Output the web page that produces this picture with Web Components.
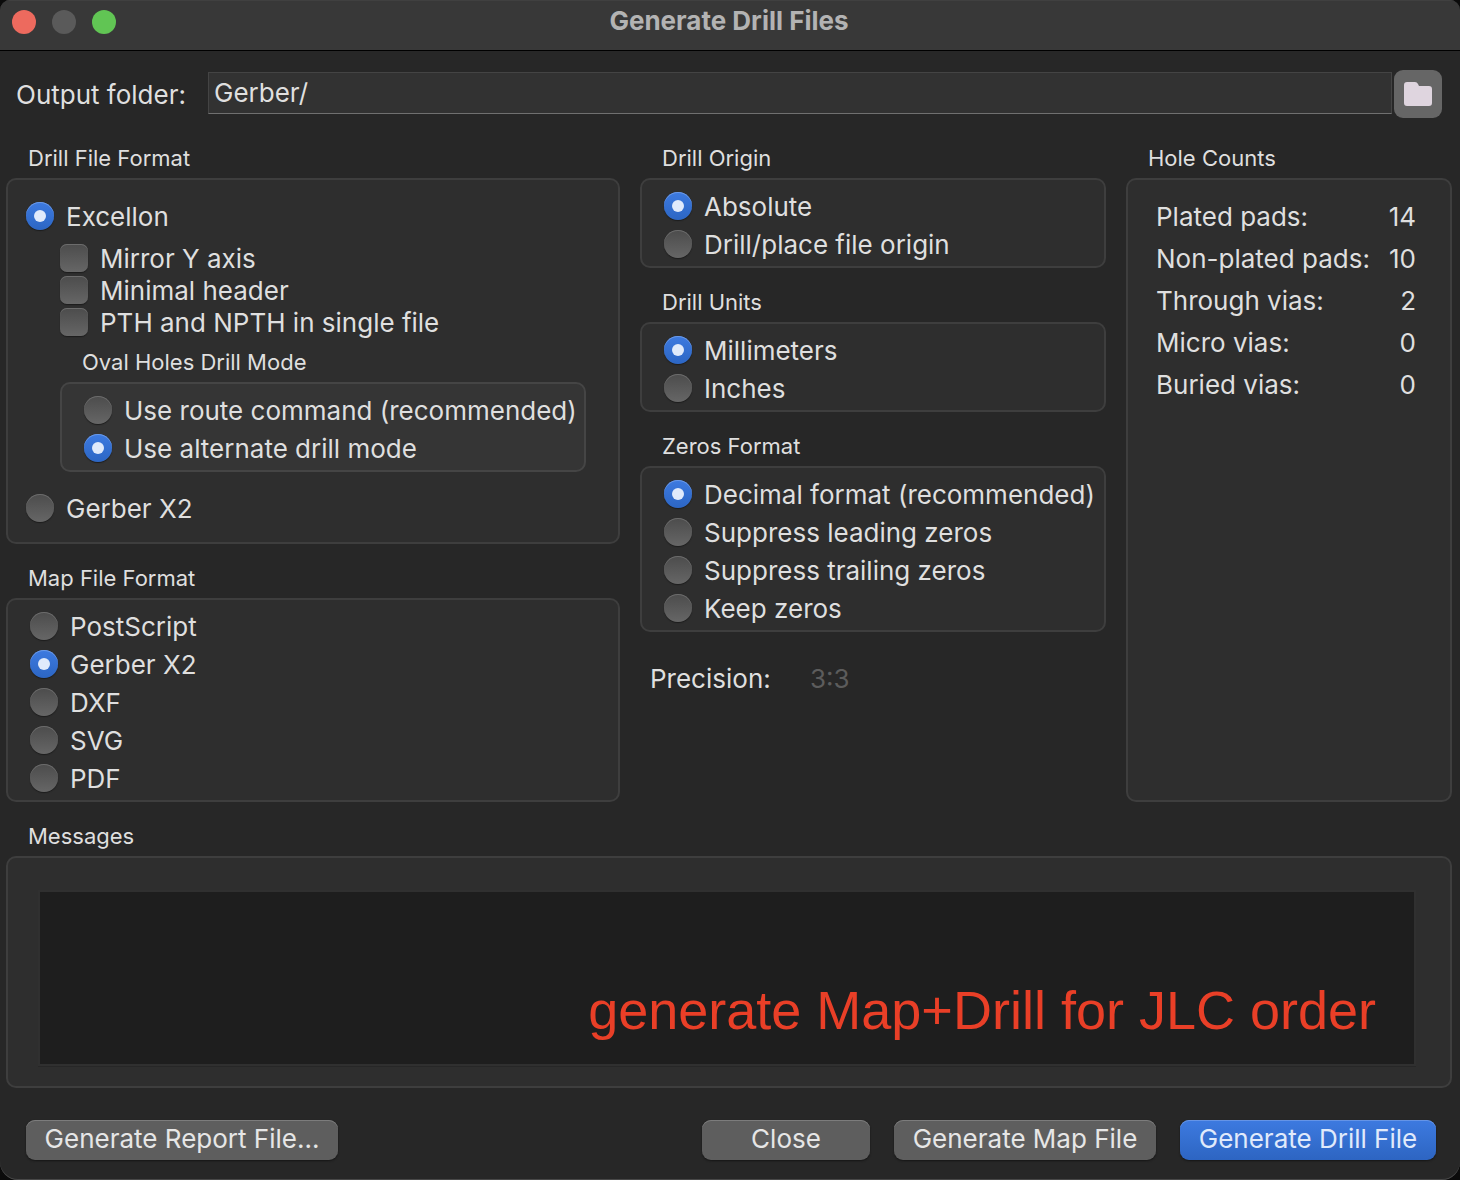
<!DOCTYPE html>
<html lang="en">
<head>
<meta charset="utf-8">
<title>Generate Drill Files</title>
<style>
  html, body { margin: 0; background: #0b0b0b; }
  body { font: 26px/28px Inter, "Liberation Sans", sans-serif; color: #dfdfdf; }
</style>
</head>
<body>
<drill-dialog></drill-dialog>

<script>
const controlCss = `
  *, *::before { box-sizing: border-box; }
  label { display: flex; align-items: center; gap: 12px; white-space: nowrap; line-height: 28px; }
  label span { padding-top: 2px; line-height: 26px; }
  input[type=radio], input[type=checkbox] {
    appearance: none; flex: none; width: 28px; height: 28px; margin: 0;
    background: linear-gradient(#4c4c4c, #666);
    box-shadow: inset 0 1px 0 #6c6c6c, 0 1px 1px #1c1c1c;
  }
  input[type=radio] { border-radius: 50%; display: grid; place-items: center; }
  input[type=checkbox] { border-radius: 7px; }
  input[type=radio]:checked {
    background: linear-gradient(#3d7ae0, #2c66c4);
    box-shadow: inset 0 1px 0 #6b99e6, 0 1px 1px #1c1c1c;
  }
  input[type=radio]:checked::before {
    content: ""; width: 12px; height: 12px; border-radius: 50%; background: #e0eafb;
  }
`;

function define(name, render) {
  customElements.define(name, class extends HTMLElement {
    constructor() {
      super();
      this.attachShadow({ mode: "open" });
    }
    connectedCallback() {
      this.shadowRoot.innerHTML = render(this);
    }
  });
}

define("title-bar", () => `
  <style>
    :host { display: grid; grid-template-columns: 1fr auto 1fr; align-items: center;
      height: 51px; box-sizing: border-box; padding: 0 14px 6px 12px; background: #383838;
      border-bottom: 1px solid #000; box-shadow: inset 0 1px 0 #404040; }
    .lights { display: flex; gap: 16px; }
    button { width: 24px; height: 24px; padding: 0; border: 0; border-radius: 50%; }
    .close { background: #ed6a5e; }
    .min { background: #5a5a5a; }
    .zoom { background: #61c554; }
    h1 { margin: 0; padding-bottom: 2px; font-size: 26px; line-height: 28px; font-weight: 700; color: #b3b3b3; }
  </style>
  <div class="lights">
    <button class="close" aria-label="Close window"></button>
    <button class="min" aria-label="Minimize" disabled></button>
    <button class="zoom" aria-label="Zoom"></button>
  </div>
  <h1><slot></slot></h1>`);

define("output-folder", () => `
  <style>
    :host { display: flex; align-items: center; padding: 0 18px 0 16px; }
    label { flex: none; width: 192px; padding-top: 2px; }
    input { flex: 1; min-width: 0; height: 42px; box-sizing: border-box; margin: 0 2px 2px 0;
      padding: 0 5px 2px; font: inherit; color: inherit; background: #323232; outline: 0; border-radius: 0;
      border: 1px solid #444; border-bottom-color: #707070; }
    button { flex: none; width: 48px; height: 48px; padding: 0; border: 0; border-radius: 9px;
      background: #666; display: grid; place-items: center; }
    svg { display: block; }
  </style>
  <label for="folder">Output folder:</label>
  <input id="folder" type="text" value="Gerber/">
  <button aria-label="Browse">
    <svg width="28" height="24" viewBox="0 0 28 24"><path fill="#dfd5df" d="M3 0h8q2 0 3 2l1 2h10q3 0 3 3v14q0 3-3 3H3q-3 0-3-3V3q0-3 3-3z"/></svg>
  </button>`);

define("group-box", el => `
  <style>
    :host { display: flex; flex-direction: column; min-width: 0; }
    .caption { padding: 0 22px; margin-bottom: 6px; font-size: 22px; line-height: 28px; }
    .frame { flex: 1; box-sizing: border-box; padding: 12px 22px 8px; background: var(--frame, #2e2e2e);
      border: 2px solid var(--edge, #3e3e3e); border-radius: 10px; display: flow-root; }
    :host([roomy]) .frame { padding: 22px 18px 20px; }
    :host([table]) .frame { padding: 16px 34px 8px 28px; }
    :host([log]) .frame { padding: 34px 36px 20px 32px; }
  </style>
  <div class="caption" id="caption">${el.getAttribute("caption")}</div>
  <div class="frame" role="group" aria-labelledby="caption"><slot></slot></div>`);

define("radio-group", el => {
  const selected = Number(el.getAttribute("selected"));
  const rows = el.getAttribute("options").split("|").map((text, i) =>
    `<label><input type="radio" name="choice"${i === selected ? " checked" : ""}><span>${text}</span></label>`);
  return `<style>${controlCss}
    :host { display: flex; flex-direction: column; gap: 10px; }
  </style>${rows.join("")}`;
});

define("drill-format", () => `
  <style>${controlCss}
    :host { display: block; }
    .options { padding: 14px 14px 22px 34px; }
    .checks { display: grid; gap: 4px; margin-bottom: 12px; }
    group-box { --frame: #353535; --edge: #454545; }
  </style>
  <label><input type="radio" name="format" checked><span>Excellon</span></label>
  <div class="options">
    <div class="checks">
      <label><input type="checkbox"><span>Mirror Y axis</span></label>
      <label><input type="checkbox"><span>Minimal header</span></label>
      <label><input type="checkbox"><span>PTH and NPTH in single file</span></label>
    </div>
    <group-box caption="Oval Holes Drill Mode">
      <radio-group options="Use route command (recommended)|Use alternate drill mode" selected="1"></radio-group>
    </group-box>
  </div>
  <label><input type="radio" name="format"><span>Gerber X2</span></label>`);

define("hole-counts", () => {
  const counts = [["Plated pads:", 14], ["Non-plated pads:", 10], ["Through vias:", 2], ["Micro vias:", 0], ["Buried vias:", 0]];
  return `<style>
    :host { display: block; }
    table { width: 100%; border-collapse: collapse; }
    th, td { padding: 0; height: 42px; font-weight: 400; text-align: left; white-space: nowrap; }
    td { text-align: right; }
  </style>
  <table>${counts.map(([name, n]) => `<tr><th scope="row">${name}</th><td>${n}</td></tr>`).join("")}</table>`;
});

define("message-log", () => `
  <style>
    :host { display: block; position: relative; padding-bottom: 2px; }
    textarea { display: block; width: 100%; height: 172px; box-sizing: border-box; resize: none; margin: 0;
      padding: 8px; font: inherit; color: inherit; outline: 0; border: 0; border-radius: 0;
      background: #1e1e1e; box-shadow: 0 0 0 2px #303030, 0 1px 0 2px #272727; }
    .note { position: absolute; right: 38px; bottom: 26px; white-space: nowrap; pointer-events: none;
      font: 54px/60px "Liberation Sans", Arial, sans-serif; color: #e93f27; }
  </style>
  <textarea readonly aria-label="Messages"></textarea>
  <div class="note"><slot></slot></div>`);

define("push-button", () => `
  <style>
    :host { display: block; width: var(--width); }
    button { width: 100%; height: 40px; padding: 0 0 2px; border: 0; border-radius: 9px; font: inherit;
      white-space: nowrap; color: #e6e6e6; background: #5e5e5e; box-shadow: inset 0 1px 0 #7c7c7c, 0 1px 2px #151515; }
    :host([primary]) button { color: #e0eafb; background: linear-gradient(#3d7ae0, #2d65c2);
      box-shadow: inset 0 1px 0 #6594e6, 0 1px 2px #151515; }
  </style>
  <button><slot></slot></button>`);

define("drill-dialog", () => `
  <style>
    :host { display: block; box-sizing: border-box; min-height: 100vh; background: #272727;
      border-radius: 10px 10px 18px 18px; overflow: hidden; box-shadow: inset 0 -1px 0 #484848; }
    main { padding: 19px 8px 20px 6px; }
    output-folder { margin: 0 -8px 26px -6px; }
    .columns { display: grid; grid-template-columns: minmax(0, 1fr) 466px 326px; gap: 20px; margin-bottom: 20px; }
    .stack { display: flex; flex-direction: column; gap: 20px; }
    .precision { display: flex; padding: 13px 10px; }
    .precision span { width: 160px; }
    .precision output { color: #5c5c5c; }
    footer { display: flex; gap: 24px; padding: 32px 16px 0 20px; }
    .spacer { flex: 1; }
  </style>
  <title-bar>Generate Drill Files</title-bar>
  <main>
    <output-folder></output-folder>
    <div class="columns">
      <div class="stack">
        <group-box caption="Drill File Format" roomy><drill-format></drill-format></group-box>
        <group-box caption="Map File Format">
          <radio-group options="PostScript|Gerber X2|DXF|SVG|PDF" selected="1"></radio-group>
        </group-box>
      </div>
      <div class="stack">
        <group-box caption="Drill Origin">
          <radio-group options="Absolute|Drill/place file origin" selected="0"></radio-group>
        </group-box>
        <group-box caption="Drill Units">
          <radio-group options="Millimeters|Inches" selected="0"></radio-group>
        </group-box>
        <group-box caption="Zeros Format">
          <radio-group options="Decimal format (recommended)|Suppress leading zeros|Suppress trailing zeros|Keep zeros" selected="0"></radio-group>
        </group-box>
        <div class="precision"><span>Precision:</span><output>3:3</output></div>
      </div>
      <group-box caption="Hole Counts" table><hole-counts></hole-counts></group-box>
    </div>
    <group-box caption="Messages" log><message-log>generate Map+Drill for JLC order</message-log></group-box>
    <footer>
      <push-button style="--width:312px">Generate Report File...</push-button>
      <div class="spacer"></div>
      <push-button style="--width:168px">Close</push-button>
      <push-button style="--width:262px">Generate Map File</push-button>
      <push-button primary style="--width:256px">Generate Drill File</push-button>
    </footer>
  </main>`);
</script>
</body>
</html>
